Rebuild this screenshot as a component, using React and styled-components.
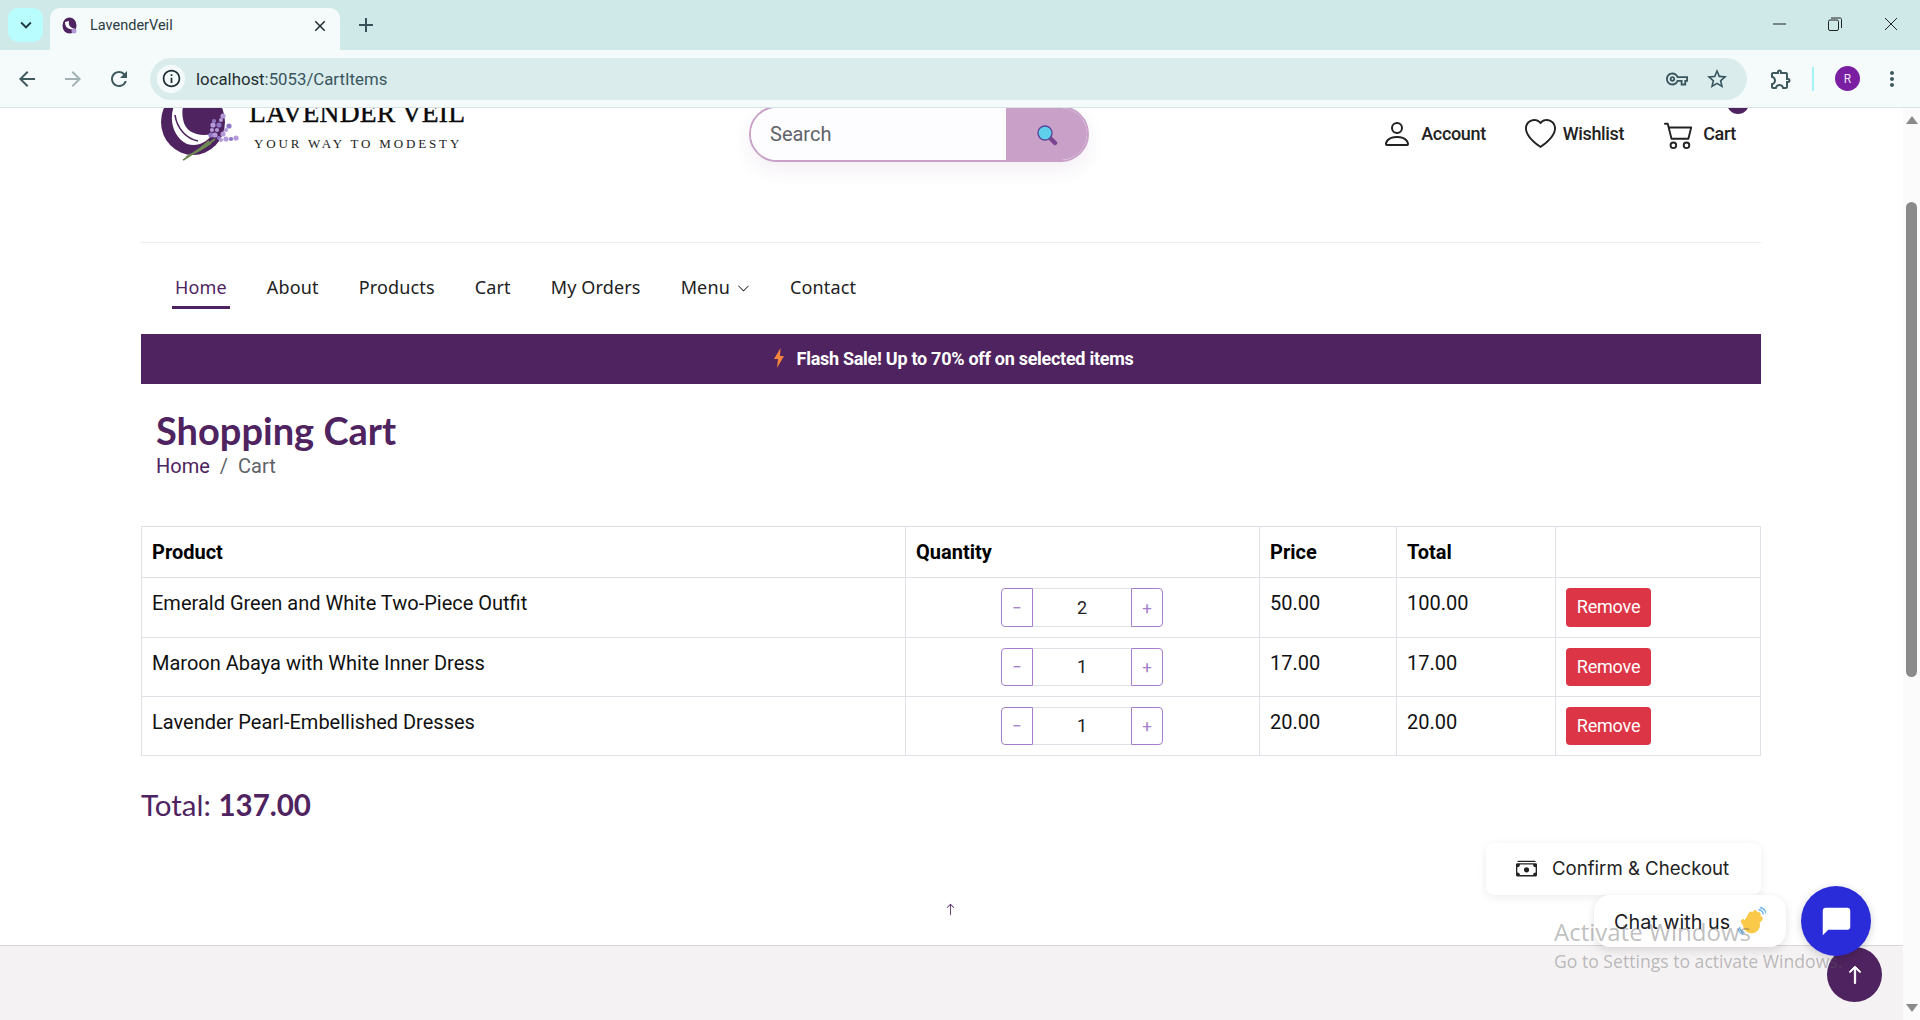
import React from 'react';
import styled, { createGlobalStyle } from 'styled-components';
import {
    BsPerson, BsHeart, BsCart2, BsCashStack, BsChevronDown, BsArrowUp,
} from 'react-icons/bs';
import {
    MdArrowBack, MdArrowForward, MdRefresh, MdInfoOutline, MdOutlineVpnKey, MdStarBorder,
    MdOutlineExtension, MdMoreVert, MdClose, MdAdd, MdKeyboardArrowDown, MdChatBubble,
} from 'react-icons/md';

const PURPLE = '#4f235f';

const GlobalStyle = createGlobalStyle`
    html, body {
        margin: 0;
        height: 100%;
        overflow: hidden;
        background: #fff;
        font-family: Roboto, "Liberation Sans", sans-serif;
    }
    * { box-sizing: border-box; }
`;

const Screen = styled.div`
    width: 1920px;
    height: 1020px;
    display: flex;
    flex-direction: column;
    overflow: hidden;
`;

/* browser chrome */
const TabStrip = styled.div`
    height: 50px;
    flex: none;
    background: #cfe8e8;
    display: flex;
    align-items: flex-end;
    padding-left: 8px;
    color: #1f3a3f;
`;

const TabList = styled.div`
    width: 35px;
    height: 34px;
    margin-bottom: 8px;
    border-radius: 10px;
    background: #b9fdff;
    display: flex;
    align-items: center;
    justify-content: center;
    font-size: 22px;
`;

const Tab = styled.div`
    width: 290px;
    height: 42px;
    margin-left: 7px;
    padding: 0 11px 7px 12px;
    border-radius: 10px 10px 0 0;
    background: #f5fbfb;
    display: flex;
    align-items: center;
    font-size: 14.5px;
    color: #2b3a3e;
`;

const TabTitle = styled.span`
    flex: 1;
    margin-left: 12px;
`;

const NewTab = styled.div`
    margin: 0 0 13px 14px;
    font-size: 24px;
    display: flex;
    color: #38525a;
`;

const WindowControls = styled.div`
    margin: 0 22px 19px auto;
    display: flex;
    gap: 42px;
    align-items: center;
`;

const Toolbar = styled.div`
    height: 58px;
    flex: none;
    background: #f5fbfb;
    border-bottom: 1px solid #d6e4e4;
    display: flex;
    align-items: center;
    padding: 1px 12px 1px 15px;
    color: #3f5a5e;
`;

const NavIcon = styled.span`
    width: 46px;
    display: flex;
    font-size: 24px;
    color: ${(p) => (p.$off ? '#a3b3b5' : '#3f5a5e')};
`;

const Address = styled.div`
    width: 1597px;
    height: 42px;
    margin-left: -3px;
    border-radius: 21px;
    background: #daecec;
    display: flex;
    align-items: center;
    padding: 0 18px 0 7px;
    font-size: 16.8px;
    color: #39555e;
`;

const InfoBadge = styled.span`
    width: 28px;
    height: 28px;
    border-radius: 50%;
    background: #f5fbfb;
    color: #1f3034;
    display: flex;
    align-items: center;
    justify-content: center;
    font-size: 21px;
`;

const Host = styled.span`
    margin-left: 11px;
    flex: 1;
    b {
        font-weight: 400;
        color: #1f2d30;
    }
`;

const AddressIcons = styled.div`
    display: flex;
    align-items: center;
    gap: 17px;
    font-size: 22px;
`;

const ToolRight = styled.div`
    display: flex;
    align-items: center;
    margin-left: 22px;
`;

const ToolSep = styled.span`
    width: 2px;
    height: 24px;
    margin: 0 21px 0 19px;
    background: #a5f3f8;
`;

const Avatar = styled.span`
    width: 25px;
    height: 25px;
    margin-right: 20px;
    border-radius: 50%;
    background: #7b1fa2;
    color: #f0e2f5;
    font-size: 12px;
    display: flex;
    align-items: center;
    justify-content: center;
`;

/* page */
const Viewport = styled.div`
    position: relative;
    flex: 1;
    min-height: 0;
    display: flex;
`;

const Page = styled.div`
    flex: 1;
    min-width: 0;
    overflow: hidden;
`;

const Scrolled = styled.div`
    margin-top: -30px;
`;

const Container = styled.div`
    width: 1620px;
    margin-left: 141px;
`;

const Scrollbar = styled.div`
    width: 17px;
    flex: none;
    background: #fbfbfb;
    display: flex;
    flex-direction: column;
    align-items: center;
    padding: 8px 0 8px;
`;

const ArrowUpTri = styled.div`
    width: 0;
    height: 0;
    border-left: 6px solid transparent;
    border-right: 6px solid transparent;
    border-bottom: 8px solid #8a8a8a;
`;

const ArrowDownTri = styled(ArrowUpTri)`
    margin-top: auto;
    transform: rotate(180deg);
`;

const Thumb = styled.div`
    width: 11px;
    height: 475px;
    margin-top: 78px;
    border-radius: 6px;
    background: #8a8a8a;
`;

const Header = styled.header`
    height: 112px;
    display: flex;
    align-items: center;
`;

const Logo = styled.div`
    display: flex;
    align-items: center;
    margin: 0 0 13px 14px;
    width: 594px;
`;

const LogoText = styled.div`
    margin: 0 0 7px 4px;
    font-family: "Liberation Serif", serif;
    color: #0a0a0a;
`;

const LogoName = styled.div`
    font-size: 27.5px;
    line-height: 30px;
    white-space: nowrap;
    letter-spacing: 0.2px;
    -webkit-text-stroke: 0.4px #0a0a0a;
`;

const LogoTag = styled.div`
    margin: 8px 0 0 5px;
    font-size: 13px;
    line-height: 15px;
    letter-spacing: 2.85px;
    white-space: nowrap;
    color: #222;
`;

const Search = styled.div`
    width: 340px;
    height: 56px;
    border: 2px solid #c8a0c8;
    border-radius: 28px;
    display: flex;
    overflow: hidden;
    box-shadow: 0 8px 20px rgba(79, 35, 95, 0.07);
`;

const SearchField = styled.div`
    flex: 1;
    padding-left: 19px;
    display: flex;
    align-items: center;
    background: #fdfcff;
    font-size: 20px;
    color: #5f6368;
`;

const SearchButton = styled.div`
    width: 81px;
    margin-bottom: -2px;
    background: #c8a0c8;
    display: flex;
    align-items: center;
    justify-content: center;
`;

const HeaderLinks = styled.div`
    margin-left: auto;
    display: flex;
    align-items: center;
    padding-right: 25px;
`;

const HeaderLink = styled.a`
    position: relative;
    display: flex;
    align-items: center;
    gap: ${(p) => p.$gap}px;
    margin-left: ${(p) => p.$ml || 0}px;
    font-size: 18px;
    font-weight: 500;
    letter-spacing: -0.35px;
    line-height: 20px;
    color: #222;
    svg {
        font-size: ${(p) => p.$icon}px;
    }
`;

const CartBadge = styled.i`
    position: absolute;
    right: -13px;
    top: -27px;
    width: 22px;
    height: 22px;
    border-radius: 50%;
    background: ${PURPLE};
`;

const Divider = styled.hr`
    margin: 52px 0 0;
    border: 0;
    border-top: 1px solid #ececec;
`;

const NavBar = styled.nav`
    height: 91px;
    display: flex;
    align-items: center;
    padding: 0 0 4px 34px;
    gap: 40px;
    font-family: "Noto Sans", sans-serif;
    font-size: 18px;
    letter-spacing: 0.15px;
    color: #222;
`;

const NavItem = styled.a`
    position: relative;
    display: flex;
    align-items: center;
    gap: 7px;
    color: ${(p) => (p.$active ? PURPLE : '#222')};
    svg {
        font-size: 13px;
        margin-top: 3px;
    }
    ${(p) => p.$active && `
        &::after {
            content: '';
            position: absolute;
            left: -3px;
            right: -3px;
            bottom: -10px;
            height: 3px;
            background: ${PURPLE};
        }
    `}
`;

const Banner = styled.div`
    height: 50px;
    padding: 0 0 2px 4px;
    background: ${PURPLE};
    color: #fff;
    display: flex;
    align-items: center;
    justify-content: center;
    gap: 12px;
    font-size: 18px;
    font-weight: 700;
    letter-spacing: -0.28px;
`;

const TitleBlock = styled.div`
    padding: 23px 15px 0;
    height: 142px;
`;

const Title = styled.h1`
    margin: 0;
    font-family: Lato, sans-serif;
    font-size: 38px;
    line-height: 46px;
    font-weight: 700;
    color: ${PURPLE};
`;

const Breadcrumb = styled.div`
    margin-top: 1px;
    font-size: 20px;
    line-height: 24px;
    color: #5f6368;
    display: flex;
    gap: 10px;
    a {
        color: ${PURPLE};
    }
`;

const Table = styled.table`
    width: 1620px;
    table-layout: fixed;
    border-collapse: collapse;
    font-size: 20px;
    color: #111;
    border: 1px solid #dee2e6;
    th, td {
        border: 1px solid #dee2e6;
        padding: 13px 10px 9px;
        text-align: left;
        vertical-align: top;
        line-height: 24px;
    }
    th {
        height: 51px;
        font-weight: 700;
        color: #000;
    }
`;

const ControlCell = styled.td`
    && {
        padding: 10px;
    }
`;

const Stepper = styled.div`
    display: flex;
    width: 162px;
    height: ${(p) => p.$h}px;
    margin-left: 85px;
    color: #222;
`;

const StepButton = styled.button`
    width: 32px;
    border: 1px solid #a67fca;
    border-radius: ${(p) => (p.$left ? '4px 0 0 4px' : '0 4px 4px 0')};
    background: #fff;
    color: #a67fca;
    font-size: 17px;
    font-family: inherit;
    padding: 0;
`;

const StepValue = styled.div`
    flex: 1;
    border-top: 1px solid #dee2e6;
    border-bottom: 1px solid #dee2e6;
    display: flex;
    align-items: center;
    justify-content: center;
    font-size: 18px;
`;

const RemoveButton = styled.button`
    display: block;
    width: 85px;
    height: ${(p) => p.$h}px;
    border: 0;
    border-radius: 4px;
    background: #dc3545;
    color: #fff;
    font-family: inherit;
    font-size: 18px;
    letter-spacing: -0.2px;
    padding: 0 0 2px;
`;

const GrandTotal = styled.div`
    margin-top: 29px;
    font-family: Lato, sans-serif;
    font-size: 29.5px;
    line-height: 40px;
    color: ${PURPLE};
    b {
        font-weight: 700;
    }
`;

const ConfirmRow = styled.div`
    margin-top: 18px;
    display: flex;
    justify-content: flex-end;
`;

const ConfirmButton = styled.button`
    width: 275px;
    height: 52px;
    border: 0;
    border-radius: 8px;
    background: #fff;
    box-shadow: 0 2px 10px rgba(0, 0, 0, 0.08);
    display: flex;
    align-items: center;
    padding: 0 0 2px 30px;
    gap: 15px;
    font-family: Inter, sans-serif;
    font-size: 18.6px;
    color: #222;
    svg {
        font-size: 21px;
    }
`;

const SmallArrow = styled.div`
    margin: 8px 0 0 803px;
    display: flex;
    color: ${PURPLE};
    font-size: 13px;
`;

const Footer = styled.footer`
    margin-top: 29px;
    height: 200px;
    background: #f5f2f4;
    border-top: 1px solid #d8d6d8;
`;

/* floating widgets */
const ChatPill = styled.div`
    position: absolute;
    left: 1594px;
    top: 787px;
    width: 192px;
    height: 52px;
    border-radius: 16px;
    background: #fff;
    box-shadow: 0 3px 10px rgba(0, 0, 0, 0.12);
    display: flex;
    align-items: center;
    padding-left: 20px;
    gap: 6px;
    font-family: Inter, sans-serif;
    font-size: 19.8px;
    color: #1b1b24;
`;

const ChatLabel = styled.span`
    margin-top: 1px;
`;

const ScrollTop = styled.div`
    position: absolute;
    left: 1827px;
    top: 839px;
    width: 55px;
    height: 55px;
    border-radius: 50%;
    background: ${PURPLE};
    color: #fff;
    display: flex;
    align-items: center;
    justify-content: center;
    font-size: 20px;
    svg {
        stroke: #fff;
        stroke-width: 0.8px;
    }
`;

const ChatFab = styled.div`
    position: absolute;
    left: 1801px;
    top: 778px;
    width: 70px;
    height: 70px;
    border-radius: 50%;
    background: #2a2bd9;
    color: #fff;
    box-shadow: 0 2px 8px rgba(0, 0, 0, 0.18);
    display: flex;
    align-items: center;
    justify-content: center;
    font-size: 33px;
`;

const Watermark = styled.div`
    position: absolute;
    left: 1554px;
    top: 808px;
    pointer-events: none;
    font-family: "Open Sans", sans-serif;
    color: rgba(90, 90, 90, 0.4);
    white-space: nowrap;
`;

const WatermarkTitle = styled.div`
    font-size: 24px;
    line-height: 32px;
`;

const WatermarkText = styled.div`
    margin-top: 2px;
    font-size: 17.6px;
    line-height: 22px;
`;

// lavender buds along each spike of the sprig in the logo
const BUDS = [
    [56, 50], [57, 45], [58, 40], [59, 36],
    [60, 50], [62, 45], [64, 40], [66, 35], [68, 31],
    [64, 53], [68, 49], [71, 45], [74, 41],
    [66, 55], [71, 54], [76, 54], [81, 53],
];

const LogoMark = () => (
    <svg width="90" height="85" viewBox="0 0 90 85" style={{ flex: 'none' }}>
        <ellipse cx="38" cy="37" rx="32" ry="33" fill={PURPLE} />
        <path d="M20 18 C13 34 18 52 32 59 C42 62 52 58 57 49 C44 52 30 48 28 34 C27 28 27 24 29 19 Z" fill="#fff" />
        <path d="M20 30 C22 44 32 54 43 56" stroke={PURPLE} strokeWidth="1.6" fill="none" />
        <path d="M28 75 C36 70 46 64 54 56 M31 72 C40 68 50 62 60 54 M34 70 C42 68 50 62 56 58" stroke="#6d8a55" strokeWidth="1.8" fill="none" />
        {BUDS.map(([cx, cy], i) => (
            <circle key={i} cx={cx} cy={cy} r={i % 2 ? 2.1 : 2.6} fill={i % 3 ? '#b49ad8' : '#8f76c4'} />
        ))}
    </svg>
);

const Favicon = () => (
    <svg width="16" height="18" viewBox="0 0 16 18">
        <ellipse cx="7.5" cy="8.5" rx="7" ry="8" fill={PURPLE} />
        <path d="M3 5 C3 11 7 13 13 12 C9 11 6 9 7 4 Z" fill="#fff" />
        <circle cx="12" cy="14" r="2.5" fill="#b49ad8" />
    </svg>
);

const Magnifier = () => (
    <svg width="22" height="22" viewBox="0 0 22 22">
        <path d="M13 13 L19 19" stroke="#7a4590" strokeWidth="4.5" strokeLinecap="round" />
        <circle cx="9" cy="9" r="7" fill="#5fd0ec" stroke="#5a4a9a" strokeWidth="1.4" />
    </svg>
);

const Bolt = () => (
    <svg width="12" height="20" viewBox="0 0 12 20">
        <path d="M7.5 0 L1 11 H5 L4 20 L11 8 H7 Z" fill="#f5843c" />
    </svg>
);

const WaveHand = () => (
    <svg width="28" height="28" viewBox="0 0 28 28" fill="none" style={{ flex: 'none', marginLeft: 2 }}>
        <g stroke="#fbc94a" strokeWidth="4.6" strokeLinecap="round">
            <path d="M8.5 15 L13 7" />
            <path d="M12 13 L17 5.5" />
            <path d="M15 14 L20.5 7.5" />
            <path d="M17 17 L22.5 11.5" />
            <path d="M9 20 L5 14.5" />
        </g>
        <circle cx="13.5" cy="18" r="8.5" fill="#fbc94a" />
        <path d="M20.5 2.5 C23 3 25 5 25.5 7.5 M22 .5 C25 1 27.5 3.5 27.8 6.5" stroke="#6cb4ea" strokeWidth="1.3" />
        <path d="M1.5 20 C2 22.5 4 25 6.5 25.5 M.3 22 C1 24.6 3 27 5.5 27.6" stroke="#6cb4ea" strokeWidth="1.3" />
    </svg>
);

const WinLine = () => (
    <svg width="14" height="14" viewBox="0 0 14 14">
        <path d="M1 7 H14" stroke="#222" strokeWidth="1" />
    </svg>
);

const WinRestore = () => (
    <svg width="14" height="14" viewBox="0 0 14 14" fill="none" stroke="#222">
        <rect x="0.5" y="3" width="10" height="10.5" rx="1.5" />
        <path d="M3 1 H12 C13 1 13.5 1.6 13.5 2.5 V11" />
    </svg>
);

const WinClose = () => (
    <svg width="14" height="14" viewBox="0 0 14 14">
        <path d="M1 1 L13 13 M13 1 L1 13" stroke="#222" strokeWidth="1" />
    </svg>
);

const ITEMS = [
    { id: 1, name: 'Emerald Green and White Two-Piece Outfit', qty: 2, price: '50.00', total: '100.00', h: 39 },
    { id: 2, name: 'Maroon Abaya with White Inner Dress', qty: 1, price: '17.00', total: '17.00', h: 38 },
    { id: 3, name: 'Lavender Pearl-Embellished Dresses', qty: 1, price: '20.00', total: '20.00', h: 38 },
];

const NAV = ['About', 'Products', 'Cart', 'My Orders'];

const App = () => (
    <Screen>
        <GlobalStyle />
        <TabStrip>
            <TabList>
                <MdKeyboardArrowDown />
            </TabList>
            <Tab>
                <Favicon />
                <TabTitle>LavenderVeil</TabTitle>
                <MdClose size={18} color="#1f2d30" />
            </Tab>
            <NewTab>
                <MdAdd />
            </NewTab>
            <WindowControls>
                <WinLine />
                <WinRestore />
                <WinClose />
            </WindowControls>
        </TabStrip>
        <Toolbar>
            <NavIcon><MdArrowBack /></NavIcon>
            <NavIcon $off><MdArrowForward /></NavIcon>
            <NavIcon><MdRefresh /></NavIcon>
            <Address>
                <InfoBadge><MdInfoOutline /></InfoBadge>
                <Host><b>localhost</b>:5053/CartItems</Host>
                <AddressIcons>
                    <MdOutlineVpnKey />
                    <MdStarBorder size={24} />
                </AddressIcons>
            </Address>
            <ToolRight>
                <MdOutlineExtension size={24} />
                <ToolSep />
                <Avatar>R</Avatar>
                <MdMoreVert size={24} />
            </ToolRight>
        </Toolbar>
        <Viewport>
            <Page>
                <Scrolled>
                    <Container>
                        <Header>
                            <Logo>
                                <LogoMark />
                                <LogoText>
                                    <LogoName>LAVENDER VEIL</LogoName>
                                    <LogoTag>YOUR WAY TO MODESTY</LogoTag>
                                </LogoText>
                            </Logo>
                            <Search>
                                <SearchField>Search</SearchField>
                                <SearchButton><Magnifier /></SearchButton>
                            </Search>
                            <HeaderLinks>
                                <HeaderLink $gap={8} $icon={32}><BsPerson />Account</HeaderLink>
                                <HeaderLink $gap={7} $icon={31} $ml={39}><BsHeart />Wishlist</HeaderLink>
                                <HeaderLink $gap={9} $icon={30} $ml={40}>
                                    <BsCart2 />Cart
                                    <CartBadge />
                                </HeaderLink>
                            </HeaderLinks>
                        </Header>
                        <Divider />
                        <NavBar>
                            <NavItem $active>Home</NavItem>
                            {NAV.map((label) => (
                                <NavItem key={label}>{label}</NavItem>
                            ))}
                            <NavItem>Menu<BsChevronDown /></NavItem>
                            <NavItem>Contact</NavItem>
                        </NavBar>
                        <Banner>
                            <Bolt />
                            Flash Sale! Up to 70% off on selected items
                        </Banner>
                        <TitleBlock>
                            <Title>Shopping Cart</Title>
                            <Breadcrumb>
                                <a>Home</a>
                                <span>/</span>
                                <span>Cart</span>
                            </Breadcrumb>
                        </TitleBlock>
                        <Table>
                            <colgroup>
                                <col style={{ width: 764 }} />
                                <col style={{ width: 354 }} />
                                <col style={{ width: 137 }} />
                                <col style={{ width: 159 }} />
                                <col />
                            </colgroup>
                            <thead>
                                <tr>
                                    <th>Product</th>
                                    <th>Quantity</th>
                                    <th>Price</th>
                                    <th>Total</th>
                                    <th />
                                </tr>
                            </thead>
                            <tbody>
                                {ITEMS.map((item) => (
                                    <tr key={item.id}>
                                        <td>{item.name}</td>
                                        <ControlCell>
                                            <Stepper $h={item.h}>
                                                <StepButton $left>−</StepButton>
                                                <StepValue>{item.qty}</StepValue>
                                                <StepButton>+</StepButton>
                                            </Stepper>
                                        </ControlCell>
                                        <td>{item.price}</td>
                                        <td>{item.total}</td>
                                        <ControlCell><RemoveButton $h={item.h}>Remove</RemoveButton></ControlCell>
                                    </tr>
                                ))}
                            </tbody>
                        </Table>
                        <GrandTotal>Total: <b>137.00</b></GrandTotal>
                        <ConfirmRow>
                            <ConfirmButton><BsCashStack />Confirm &amp; Checkout</ConfirmButton>
                        </ConfirmRow>
                        <SmallArrow><BsArrowUp /></SmallArrow>
                    </Container>
                    <Footer />
                </Scrolled>
            </Page>
            <Scrollbar>
                <ArrowUpTri />
                <Thumb />
                <ArrowDownTri />
            </Scrollbar>
            <ScrollTop><BsArrowUp /></ScrollTop>
            <ChatPill><ChatLabel>Chat with us</ChatLabel><WaveHand /></ChatPill>
            <ChatFab><MdChatBubble /></ChatFab>
            <Watermark>
                <WatermarkTitle>Activate Windows</WatermarkTitle>
                <WatermarkText>Go to Settings to activate Windows.</WatermarkText>
            </Watermark>
        </Viewport>
    </Screen>
);

export default App;
